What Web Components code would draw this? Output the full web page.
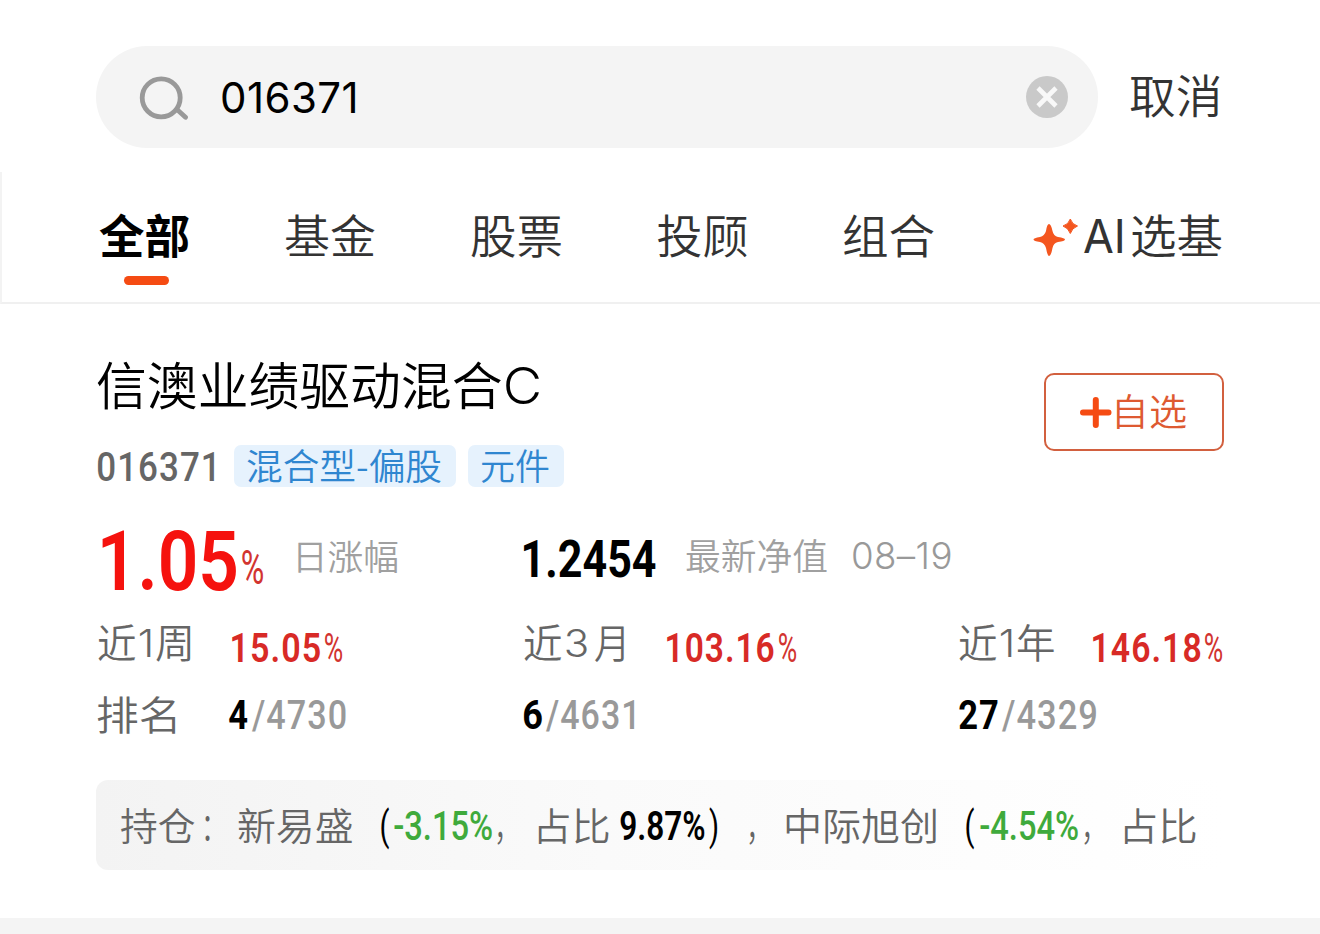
<!DOCTYPE html>
<html lang="zh-CN">
<head>
<meta charset="utf-8">
<title>016371</title>
<style>
    body {
        margin: 0;
        width: 1320px;
        height: 934px;
        overflow: hidden;
        background: #fff;
        font-family: "Noto Sans CJK SC", sans-serif;
        color: #333;
    }
</style>
</head>
<body>
<fund-page></fund-page>

<script>
    const ctx = document.createElement('canvas').getContext('2d');

    // one run of text, stretched so that its ink is exactly `w` wide
    class FitText extends HTMLElement {
        constructor() {
            super();
            this.attachShadow({ mode: 'open' }).innerHTML = `
                <style>
                    :host {
                        display: inline-block;
                        flex: none;
                        line-height: 0;
                        white-space: nowrap;
                        font-size: 40px;
                        font-weight: 350;
                    }
                    :host([face="din"]) { font-family: Roboto, sans-serif; font-weight: 500; letter-spacing: 0.03em; }
                    :host([face="num"]) { font-family: Inter, sans-serif; letter-spacing: 0.01em; }
                    :host([tight]) { letter-spacing: 0; }
                    span { display: inline-block; transform-origin: 0 0; }
                </style>
                <span><slot></slot></span>
            `;
        }

        connectedCallback() {
            const size = this.getAttribute('size');
            if (size) this.style.fontSize = size + 'px';
            if (this.hasAttribute('weight')) this.style.fontWeight = this.getAttribute('weight');
            if (this.hasAttribute('color')) this.style.color = this.getAttribute('color');
            if (this.hasAttribute('gap')) this.style.marginLeft = this.getAttribute('gap') + 'px';

            const cs = getComputedStyle(this);
            ctx.font = `${cs.fontWeight} ${cs.fontSize} ${cs.fontFamily}`;
            ctx.letterSpacing = cs.letterSpacing === 'normal' ? '0px' : cs.letterSpacing;
            const m = ctx.measureText(this.textContent);
            const ink = m.actualBoundingBoxLeft + m.actualBoundingBoxRight;
            const w = Number(this.getAttribute('w'));
            const dy = Number(this.getAttribute('dy') || 0);
            const scale = w / ink;
            this.style.width = w + 'px';
            this.shadowRoot.querySelector('span').style.transform =
                `translate(${m.actualBoundingBoxLeft * scale}px, ${dy}px) scaleX(${scale})`;
        }
    }

    // row whose bottom edge is the text baseline
    class BaseRow extends HTMLElement {
        constructor() {
            super();
            this.attachShadow({ mode: 'open' }).innerHTML = `
                <style>
                    :host { display: flex; align-items: baseline; height: var(--h); }
                    i { width: 0; height: var(--h); flex: none; }
                </style>
                <i></i><slot></slot>
            `;
        }
    }

    class SearchBar extends HTMLElement {
        constructor() {
            super();
            this.attachShadow({ mode: 'open' }).innerHTML = `
                <style>
                    :host { display: flex; padding: 46px 0 0 96px; height: 102px; }
                    .box {
                        box-sizing: border-box;
                        display: flex;
                        width: 1002px;
                        height: 102px;
                        padding: 0 30px 0 42px;
                        border-radius: 51px;
                        background: #f4f4f4;
                        align-items: center;
                    }
                    .value { flex: 1; align-self: flex-start; margin-left: 32.5px; --h: 67px; }
                    .cancel { margin-left: 31.5px; --h: 67px; }
                    svg { display: block; flex: none; }
                </style>
                <div class="box">
                    <svg width="51" height="46" viewBox="138 74 51 46" fill="none" stroke="#999" stroke-width="4.8" stroke-linecap="round">
                        <circle cx="161.2" cy="97.8" r="19" />
                        <path d="M177 109.5L185.5 117.3" />
                    </svg>
                    <base-row class="value"><fit-text face="num" size="42" weight="400" w="133.5" color="#000">016371</fit-text></base-row>
                    <svg width="42" height="42" viewBox="0 0 42 42">
                        <circle cx="21" cy="21" r="21" fill="#c9c9c9" />
                        <path d="M12 12L30 30M30 12L12 30" stroke="#f8f8f8" stroke-width="4.6" />
                    </svg>
                </div>
                <base-row class="cancel"><fit-text size="46" w="89.5">取消</fit-text></base-row>
            `;
        }
    }

    class TabBar extends HTMLElement {
        constructor() {
            super();
            this.attachShadow({ mode: 'open' }).innerHTML = `
                <style>
                    :host {
                        display: block;
                        box-sizing: border-box;
                        height: 132px;
                        margin-top: 24px;
                        border-left: 2px solid #f3f3f3;
                        border-bottom: 2px solid #f0f0f0;
                        padding-left: 97px;
                    }
                    base-row { --h: 81px; }
                    .line { width: 45px; height: 9px; border-radius: 5px; margin: 23px 0 0 25px; background: #f54b13; }
                    svg { flex: none; margin: 0 0 -3px 98.5px; align-self: flex-end; }
                </style>
                <base-row>
                    <fit-text size="46" weight="700" w="90" color="#000">全部</fit-text>
                    <fit-text size="46" w="90" gap="96">基金</fit-text>
                    <fit-text size="46" w="90" gap="96">股票</fit-text>
                    <fit-text size="46" w="90" gap="96.5">投顾</fit-text>
                    <fit-text size="46" w="90" gap="96.5">组合</fit-text>
                    <svg width="46" height="40" viewBox="1033 217 46 40" fill="#f4561f">
                        <path d="M1049 225Q1051 225 1052.5 232Q1053.5 237 1058 238Q1065 239 1065 240.5Q1065 242 1058 243Q1053.5 244 1052.5 249Q1051 257 1049 257Q1047.5 257 1046 249Q1044.5 244 1040 243Q1033.5 242 1033.5 240.5Q1033.5 239 1040 238Q1044.5 237 1046 232Q1047 225 1049 225Z" />
                        <path d="M1070.3 220Q1072 225.5 1077.5 227Q1072 229 1070.3 234.5Q1068.5 229 1063 227Q1068.5 225.5 1070.3 220Z" stroke="#f4561f" />
                    </svg>
                    <fit-text face="num" size="46.5" weight="400" w="38.5" gap="5" tight>AI</fit-text>
                    <fit-text size="46" w="90" gap="10">选基</fit-text>
                </base-row>
                <div class="line"></div>
            `;
        }
    }

    class FundTag extends HTMLElement {
        constructor() {
            super();
            this.attachShadow({ mode: 'open' }).innerHTML = `
                <style>
                    :host {
                        display: block;
                        height: 42px;
                        padding: 0 15px 0 13px;
                        margin-right: 12px;
                        border-radius: 7px;
                        background: #e6f2fd;
                        color: #2f86d0;
                    }
                    base-row { --h: 34.5px; }
                </style>
                <base-row><slot></slot></base-row>
            `;
        }
    }

    class AddButton extends HTMLElement {
        constructor() {
            super();
            this.attachShadow({ mode: 'open' }).innerHTML = `
                <style>
                    :host {
                        box-sizing: border-box;
                        display: flex;
                        width: 180px;
                        height: 78px;
                        padding-left: 34px;
                        border: 2px solid #d2603f;
                        border-radius: 10px;
                        color: #de5a31;
                    }
                    svg { margin-top: 21px; flex: none; }
                    base-row { --h: 50.5px; margin-left: 4px; }
                </style>
                <svg width="33" height="33" viewBox="0 0 33 33" stroke="#f54b13" stroke-width="6" stroke-linecap="round">
                    <path d="M3 16.5H28.5M15.8 4V29" />
                </svg>
                <base-row><slot></slot></base-row>
            `;
        }
    }

    class HoldingBar extends HTMLElement {
        constructor() {
            super();
            this.attachShadow({ mode: 'open' }).innerHTML = `
                <style>
                    :host {
                        display: block;
                        box-sizing: border-box;
                        width: 1128px;
                        height: 90px;
                        margin: 52px 0 0 -1px;
                        padding-left: 25px;
                        border-radius: 12px;
                        background: linear-gradient(90deg, #f3f3f3, #fafafa 45%, #fff);
                        color: #666;
                    }
                    base-row { --h: 59.5px; }
                </style>
                <base-row><slot></slot></base-row>
            `;
        }
    }

    class FundCard extends HTMLElement {
        constructor() {
            super();
            this.attachShadow({ mode: 'open' }).innerHTML = `
                <style>
                    :host { display: block; padding: 0 96px 0 97px; height: 614px; box-sizing: border-box; }
                    .head { display: flex; justify-content: space-between; height: 183px; }
                    .title { --h: 101px; }
                    .sub { display: flex; margin-top: 40px; }
                    .sub .code { --h: 36px; width: 137px; }
                    add-button { margin-top: 69px; }
                    .grid { display: grid; grid-template-columns: 426px 435px 1fr; }
                    .top { --h: 103px; }
                    .mid { --h: 72px; }
                    .rank { --h: 66px; }
                </style>
                <div class="head">
                    <div>
                        <base-row class="title">
                            <fit-text size="51" w="404.5" color="#000">信澳业绩驱动混合</fit-text>
                            <fit-text face="num" size="50" weight="300" w="33.5" gap="4" dy="-1" color="#000">C</fit-text>
                        </base-row>
                        <div class="sub">
                            <base-row class="code"><fit-text face="din" size="41" w="116.5" gap="1" color="#666">016371</fit-text></base-row>
                            <fund-tag><fit-text size="36" w="194">混合型-偏股</fit-text></fund-tag>
                            <fund-tag><fit-text size="36" w="68">元件</fit-text></fund-tag>
                        </div>
                    </div>
                    <add-button><fit-text size="37" w="69">自选</fit-text></add-button>
                </div>
                <div class="grid">
                    <base-row class="top">
                        <fit-text face="din" size="83" weight="600" w="134" gap="5" color="#f5120e" tight>1.05</fit-text>
                        <fit-text face="din" size="49" weight="400" w="21" gap="5.5" dy="-6" color="#d23430" tight>%</fit-text>
                        <fit-text size="35" weight="350" w="100" gap="35" dy="-20" color="#a0a0a0">日涨幅</fit-text>
                    </base-row>
                    <base-row class="top">
                        <fit-text face="din" size="51" weight="700" w="131.5" gap="0.5" dy="-13" color="#000" tight>1.2454</fit-text>
                        <fit-text size="36" weight="350" w="141" gap="31" dy="-20" color="#a0a0a0">最新净值</fit-text>
                        <fit-text face="num" size="36.5" weight="300" w="97.5" gap="26" dy="-21.5" color="#999">08–19</fit-text>
                    </base-row>
                    <span></span>
                    <base-row class="mid">
                        <fit-text size="40" w="37.5" gap="0.5" dy="-4" color="#666">近</fit-text><fit-text face="num" size="38" w="11" gap="4.5" dy="-5" color="#666">1</fit-text><fit-text size="40" w="35" gap="5.5" dy="-4" color="#666">周</fit-text>
                        <fit-text face="din" size="41" weight="600" w="88" gap="41" color="#d82a26">15.05</fit-text>
                        <fit-text face="din" size="41" weight="400" w="17.5" gap="5" color="#d23430" tight>%</fit-text>
                    </base-row>
                    <base-row class="mid">
                        <fit-text size="40" w="37.5" gap="1" dy="-4" color="#666">近</fit-text><fit-text face="num" size="38" weight="300" w="21" gap="4.5" dy="-5" color="#666">3</fit-text><fit-text size="40" w="29" gap="8" dy="-4" color="#666">月</fit-text>
                        <fit-text face="din" size="41" weight="600" w="106.5" gap="43" color="#d82a26">103.16</fit-text>
                        <fit-text face="din" size="41" weight="400" w="17.5" gap="5" color="#d23430" tight>%</fit-text>
                    </base-row>
                    <base-row class="mid">
                        <fit-text size="40" w="37.5" gap="0.5" dy="-4" color="#666">近</fit-text><fit-text face="num" size="38" w="11" gap="4.5" dy="-5" color="#666">1</fit-text><fit-text size="40" w="37.5" gap="5.5" dy="-4" color="#666">年</fit-text>
                        <fit-text face="din" size="41" weight="600" w="107.5" gap="38" color="#d82a26">146.18</fit-text>
                        <fit-text face="din" size="41" weight="400" w="17.5" gap="5" color="#d23430" tight>%</fit-text>
                    </base-row>
                    <base-row class="rank">
                        <fit-text size="40" w="78" dy="1.5" color="#666">排名</fit-text>
                        <fit-text face="din" size="41" weight="700" w="18.5" gap="54" dy="0.5" color="#000" tight>4</fit-text>
                        <fit-text face="din" size="41" w="94" gap="4.5" dy="0.5" color="#999">/4730</fit-text>
                    </base-row>
                    <base-row class="rank">
                        <fit-text face="din" size="41" weight="700" w="18.5" gap="0.5" dy="0.5" color="#000" tight>6</fit-text>
                        <fit-text face="din" size="41" w="88.5" gap="4" dy="0.5" color="#999">/4631</fit-text>
                    </base-row>
                    <base-row class="rank">
                        <fit-text face="din" size="41" weight="700" w="38.5" gap="0.5" dy="0.5" color="#000">27</fit-text>
                        <fit-text face="din" size="41" w="94" gap="5" dy="0.5" color="#999">/4329</fit-text>
                    </base-row>
                </div>
                <holding-bar>
                    <fit-text size="38" w="73.5">持仓</fit-text>
                    <fit-text size="38" w="5" gap="10.5">：</fit-text>
                    <fit-text size="38" w="114.5" gap="28">新易盛</fit-text>
                    <fit-text face="din" size="41" weight="400" w="8.5" gap="28" color="#000" tight>(</fit-text>
                    <fit-text face="din" size="40" w="98" gap="5" color="#3faa3c" tight>-3.15%</fit-text>
                    <fit-text size="38" w="6" gap="5">，</fit-text>
                    <fit-text size="38" w="69.5" gap="36">占比</fit-text>
                    <fit-text face="din" size="40" weight="600" w="84.5" gap="11.5" color="#000" tight>9.87%</fit-text>
                    <fit-text face="din" size="41" weight="400" w="8.5" gap="4" color="#000" tight>)</fit-text>
                    <fit-text size="38" w="6" gap="32">，</fit-text>
                    <fit-text size="38" w="150" gap="31">中际旭创</fit-text>
                    <fit-text face="din" size="41" weight="400" w="8.5" gap="29.5" color="#000" tight>(</fit-text>
                    <fit-text face="din" size="40" w="98" gap="6" color="#3faa3c" tight>-4.54%</fit-text>
                    <fit-text size="38" w="6" gap="5.5">，</fit-text>
                    <fit-text size="38" w="70.5" gap="35">占比</fit-text>
                </holding-bar>
            `;
        }
    }

    class FundPage extends HTMLElement {
        constructor() {
            super();
            this.attachShadow({ mode: 'open' }).innerHTML = `
                <style>
                    :host { display: flex; flex-direction: column; height: 934px; }
                    search-bar, tab-bar, fund-card { flex: none; }
                    .foot { height: 16px; background: #f4f4f4; }
                </style>
                <search-bar></search-bar>
                <tab-bar></tab-bar>
                <fund-card></fund-card>
                <div class="foot"></div>
            `;
        }
    }

    customElements.define('fit-text', FitText);
    customElements.define('base-row', BaseRow);
    customElements.define('search-bar', SearchBar);
    customElements.define('tab-bar', TabBar);
    customElements.define('fund-tag', FundTag);
    customElements.define('add-button', AddButton);
    customElements.define('holding-bar', HoldingBar);
    customElements.define('fund-card', FundCard);
    customElements.define('fund-page', FundPage);
</script>
</body>
</html>
